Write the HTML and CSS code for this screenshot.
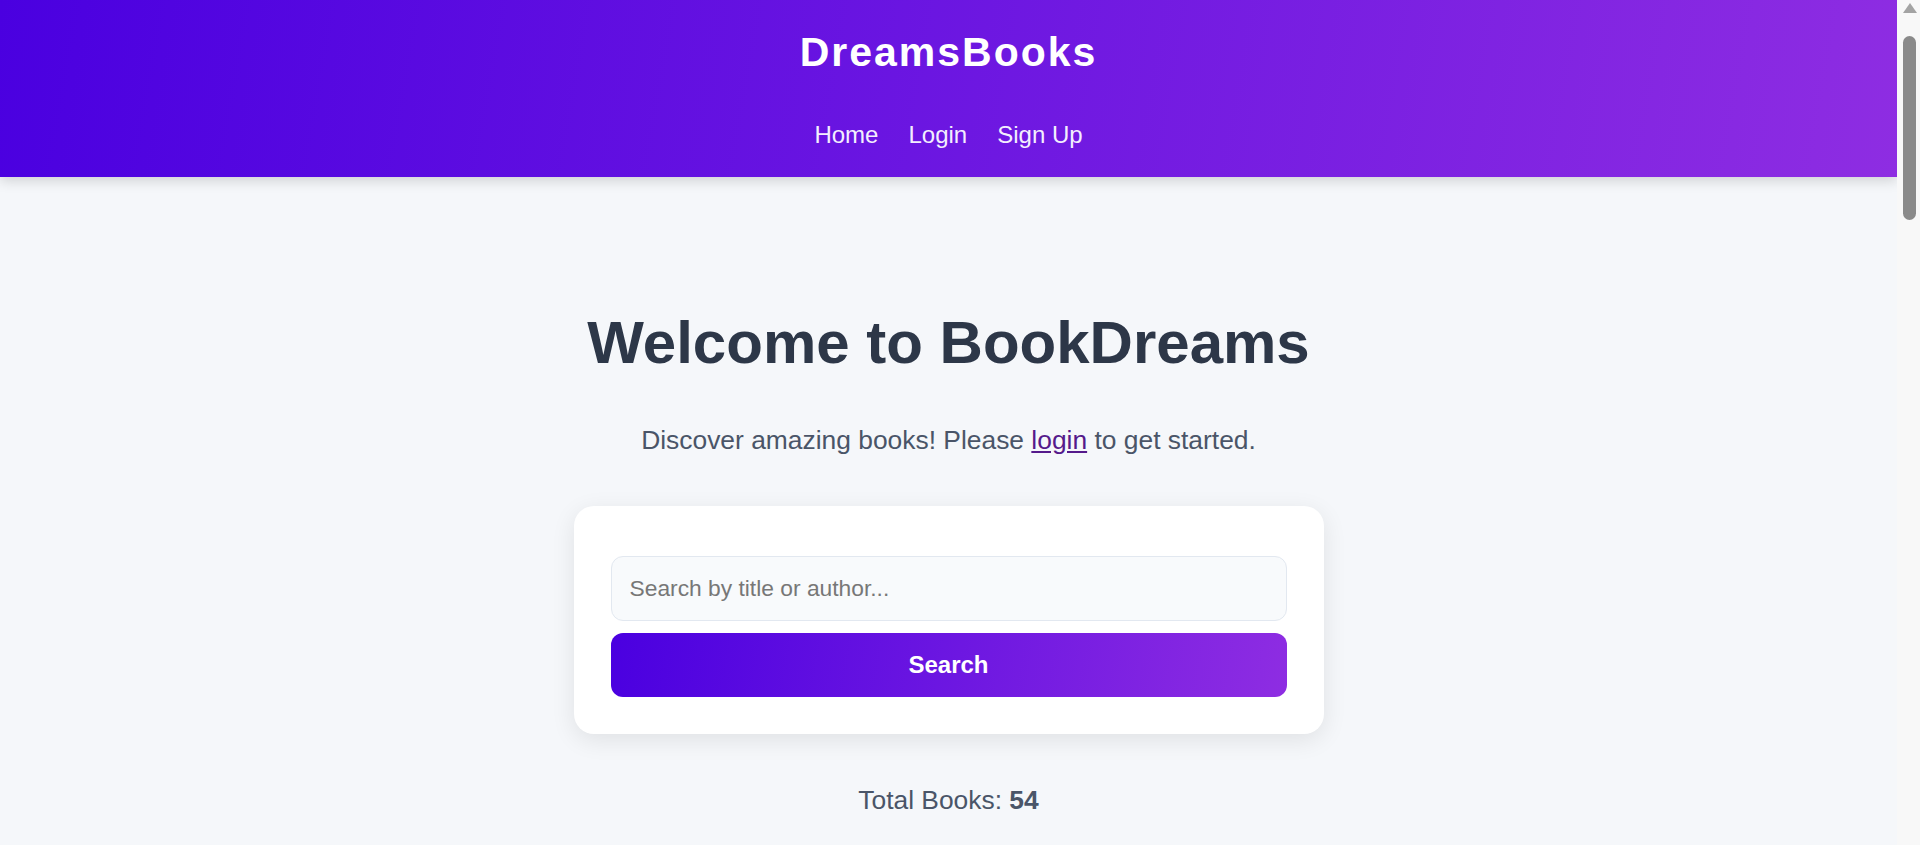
FILE: index.html
```html
<!DOCTYPE html>
<html lang="en">
<head>
<meta charset="utf-8">
<title>DreamsBooks</title>
<link rel="stylesheet" href="styles.css">
</head>
<body>
<header class="site-header">
  <div class="brand">DreamsBooks</div>
  <nav class="nav">
    <a href="#" class="nav-link">Home</a>
    <a href="#" class="nav-link">Login</a>
    <a href="#" class="nav-link">Sign Up</a>
  </nav>
</header>
<main class="main">
  <h1 class="hero-title">Welcome to BookDreams</h1>
  <p class="hero-sub">Discover amazing books! Please <a href="#" class="inline-link">login</a> to get started.</p>
  <section class="search-card">
    <form class="search-form">
      <input class="search-input" type="text" placeholder="Search by title or author...">
      <button class="search-btn" type="button">Search</button>
    </form>
  </section>
  <p class="total">Total Books: <strong>54</strong></p>
  <section class="book-grid"></section>
</main>
<div class="scrollbar" aria-hidden="true">
  <span class="scroll-arrow"></span>
  <span class="scroll-thumb"></span>
</div>
</body>
</html>
```
FILE: styles.css
```css
* { box-sizing: border-box; }
html, body { margin: 0; padding: 0; }
body {
  padding-right: 23px;
  background: #f5f7fa;
  font-family: "Liberation Sans", Arial, sans-serif;
  color: #2d3748;
}
.site-header {
  background: linear-gradient(100deg, #4a00e0 0%, #8e2de2 100%);
  box-shadow: 0 4px 12px rgba(0,0,0,0.15);
  padding: 29px 0 28px;
  display: flex;
  flex-direction: column;
  align-items: center;
  position: relative;
  z-index: 1;
}
.brand {
  color: #fff;
  font-weight: 700;
  font-size: 41px;
  line-height: 46px;
  letter-spacing: 2px;
  margin-bottom: 46px;
}
.nav {
  display: flex;
  gap: 30px;
}
.nav-link {
  color: #f3eefe;
  text-decoration: none;
  font-size: 24px;
  line-height: 28px;
}
.main {
  display: flex;
  flex-direction: column;
  align-items: center;
  padding-top: 131px;
}
.hero-title {
  margin: 0;
  font-size: 60px;
  line-height: 69px;
  font-weight: 700;
  color: #2d3748;
}
.hero-sub {
  margin: 48px 0 0;
  font-size: 26.4px;
  line-height: 30px;
  color: #4a5568;
}
.inline-link { color: #551a8b; }
.search-card {
  margin-top: 51px;
  width: 750px;
  background: #fff;
  border-radius: 20px;
  box-shadow: 0 6px 24px rgba(0,0,0,0.09);
  padding: 50px 37px 37px;
}
.search-form {
  display: flex;
  flex-direction: column;
  gap: 12px;
}
.search-input {
  height: 65px;
  width: 100%;
  padding: 0 18px;
  background: #f8fafc;
  border: 1px solid #e2e8f0;
  border-radius: 12px;
  font-family: "Liberation Sans", Arial, sans-serif;
  font-size: 22.8px;
  color: #2d3748;
  outline: none;
}
.search-input::placeholder { color: #777; }
.search-btn {
  height: 64px;
  width: 100%;
  border: none;
  border-radius: 12px;
  background: linear-gradient(100deg, #4a00e0 0%, #8e2de2 100%);
  color: #fff;
  font-family: "Liberation Sans", Arial, sans-serif;
  font-size: 24px;
  font-weight: 700;
}
.total {
  margin: 51px 0 0;
  font-size: 26.4px;
  line-height: 30px;
  color: #4a5568;
}
.book-grid {
  width: 100%;
  min-height: 2800px;
}
.scrollbar {
  position: fixed;
  top: 0;
  right: 0;
  width: 23px;
  height: 100vh;
  background: #f8f8f8;
  z-index: 5;
  display: flex;
  flex-direction: column;
  align-items: center;
  padding-left: 2px;
}
.scroll-arrow {
  margin-top: 3px;
  width: 0;
  height: 0;
  border-left: 7px solid transparent;
  border-right: 7px solid transparent;
  border-bottom: 10px solid #a3a3a3;
}
.scroll-thumb {
  margin-top: 23px;
  width: 13px;
  height: 184px;
  border-radius: 7px;
  background: #8a8a8a;
}
```
